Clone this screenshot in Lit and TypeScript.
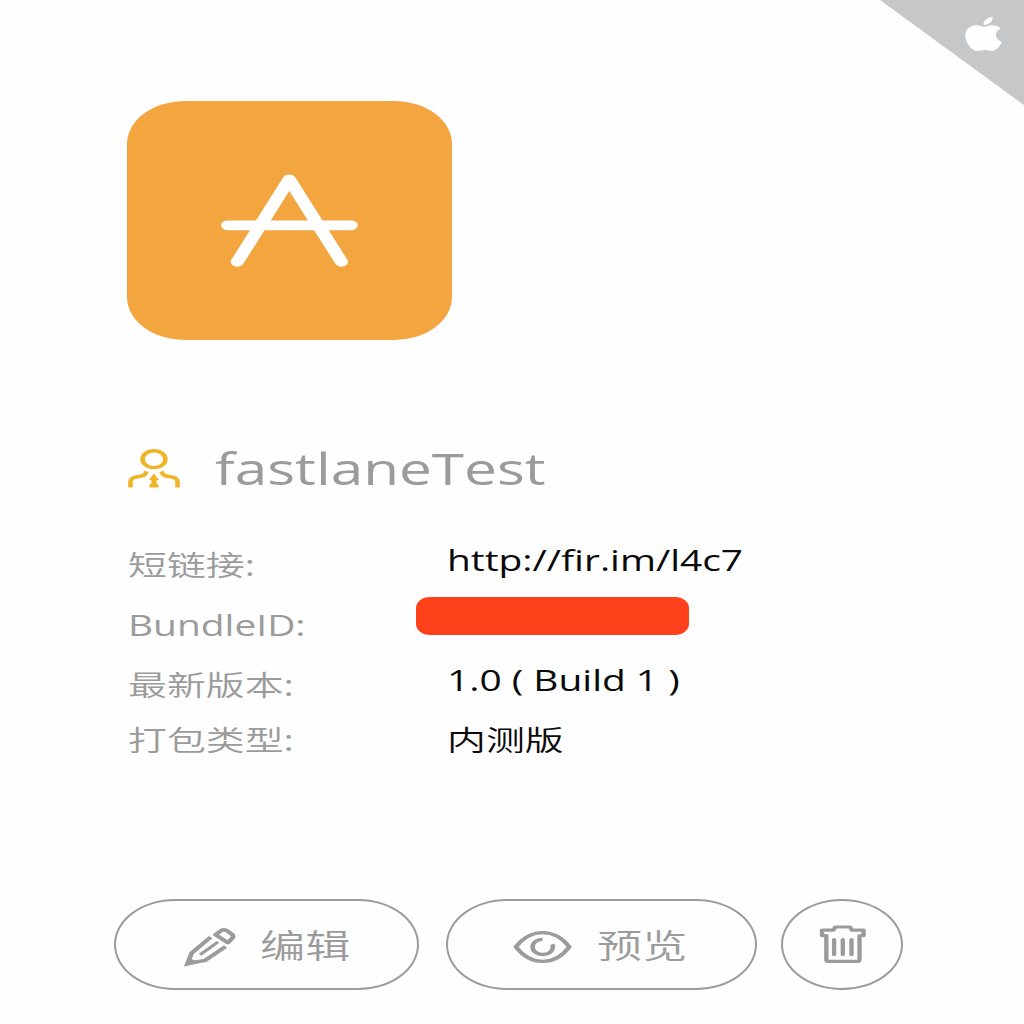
import { LitElement, html, css, svg } from "lit";
import { customElement, property } from "lit/decorators.js";

/* Text drawn with wide letterforms; the box keeps its natural flow position. */
@customElement("wide-text")
class WideText extends LitElement {
  static styles = css`
    :host {
      display: block;
      white-space: pre;
    }
    .glyphs {
      display: inline-block;
      transform: scaleX(1.36);
      transform-origin: 0 50%;
    }
  `;
  render() {
    return html`<span class="glyphs"><slot></slot></span>`;
  }
}

const shapes: Record<string, { w: number; h: number; art: unknown }> = {
  apple: {
    w: 37,
    h: 34,
    art: svg`<g transform="scale(1.88 1.417) translate(-2.1 0)"><path fill="currentColor" d="M12.152 6.896c-.948 0-2.415-1.078-3.96-1.04-2.04.027-3.91 1.183-4.961 3.014-2.117 3.675-.546 9.103 1.519 12.09 1.013 1.454 2.208 3.09 3.792 3.039 1.52-.065 2.09-.687 3.935-.687 1.831 0 2.35.687 3.96.648 1.637-.026 2.676-1.48 3.676-2.948 1.156-1.688 1.636-3.325 1.662-3.415-.039-.013-3.182-1.221-3.22-4.857-.026-3.04 2.48-4.494 2.597-4.559-1.429-2.09-3.623-2.324-4.39-2.376-2-.156-3.675 1.09-4.61 1.09zM15.53 3.83c.843-1.012 1.4-2.427 1.245-3.83-1.207.052-2.662.805-3.532 1.818-.78.896-1.454 2.338-1.273 3.714 1.338.104 2.715-.688 3.559-1.701"/></g>`,
  },
  store: {
    w: 137,
    h: 93,
    art: svg`<g transform="scale(1.36 1)" fill="none" stroke="currentColor" stroke-width="9.7" stroke-linecap="round" stroke-linejoin="round"><path d="M12 87.8 50.2 5.4 88.5 87.8M4.9 51.3H95.7"/></g>`,
  },
  user: {
    w: 52,
    h: 41,
    art: svg`<g transform="scale(1.36 1)" fill="none" stroke="currentColor" stroke-width="3.4"><circle cx="19.1" cy="11.2" r="8.4"/><path d="M13.6 23.4 12.6 26Q11.8 27.6 10 28L5.4 29.2Q1.8 30.4 1.8 34V39.5M24.6 23.4 25.6 26Q26.4 27.6 28.2 28L32.8 29.2Q36.4 30.4 36.4 34V39.5"/><path fill="currentColor" stroke="none" d="M19.1 25.4 22.8 32H21V35.4L22.4 36.2V39.5H15.8V36.2L17.2 35.4V32H15.4Z"/></g>`,
  },
  pencil: {
    w: 52,
    h: 40,
    art: svg`<g transform="scale(1.36 1)" fill="none" stroke="currentColor" stroke-width="3.5"><path d="M19.6 10.2 5.6 26 2.8 36.2 15.6 33.4 30.6 19.5"/><path d="M11.8 27.8 25 15" stroke-width="2.7"/><path fill="currentColor" stroke="none" d="M0 39.4 3.6 27.4 6.2 32.4 11.6 35.9Z"/><path stroke-linejoin="round" d="M23.2 7.7 27.2 3.7Q29.2 2.1 31.4 3.6L35 7Q37 9.2 35.4 11.4L32.2 15.6Z"/></g>`,
  },
  eye: {
    w: 59,
    h: 34,
    art: svg`<g transform="scale(1.36 1)" fill="none" stroke="currentColor" stroke-width="3.3"><path stroke-linejoin="round" d="M2.1 16.9C7 8.5 13.5 2.6 21.8 2.6S36.6 8.5 41.4 16.9C36.6 25.6 30 31.4 21.8 31.4S7 25.6 2.1 16.9Z"/><path d="M21.6 9.3A7.5 7.6 0 1 0 28.9 14.3"/></g>`,
  },
  trash: {
    w: 48,
    h: 41,
    art: svg`<g transform="scale(1.36 1)" fill="none" stroke="currentColor" stroke-width="3.2" stroke-linejoin="round"><path d="M5.4 11.6H2.2V6.1H10.6L12 3H22.8L24.2 6.1H32.8V11.6H29.8M5.4 10.4V35.4Q5.4 37.4 7.4 37.4H27.8Q29.8 37.4 29.8 35.4V10.4"/><path stroke-linecap="round" d="M11.1 15.6V30.4M17.5 15.6V30.4M23.9 15.6V30.4"/></g>`,
  },
};

@customElement("app-icon")
class AppIcon extends LitElement {
  static styles = css`
    :host {
      display: block;
      flex: none;
    }
    .art {
      display: block;
    }
  `;
  @property() name = "apple";
  render() {
    const s = shapes[this.name];
    return html`<svg class="art" width=${s.w} height=${s.h} viewBox="0 0 ${s.w} ${s.h}" aria-hidden="true">${s.art}</svg>`;
  }
}

@customElement("app-root")
class AppRoot extends LitElement {
  static styles = css`
    :host {
      display: block;
      position: relative;
      box-sizing: border-box;
      width: 1024px;
      height: 1024px;
      padding-top: 100.5px;
      overflow: hidden;
      background: #fefefe;
      color: #9b9b9b;
      font-family: "Open Sans", "Noto Sans CJK SC", sans-serif;
      font-size: 28.6px;
    }
    .ribbon {
      position: absolute;
      top: 0;
      right: 0;
      box-sizing: border-box;
      display: flex;
      justify-content: flex-end;
      width: 144px;
      height: 105px;
      padding: 17px 22px 0 0;
      background: #c6c7c9;
      color: #fefefe;
      clip-path: polygon(0 0, 100% 0, 100% 100%);
    }
    .tile {
      box-sizing: border-box;
      width: 325px;
      height: 239.5px;
      margin-left: 127px;
      padding: 73.5px 0 0 94px;
      border-radius: 58px / 43px;
      background: #f3a540;
      color: #fff;
    }
    .title {
      display: flex;
      align-items: center;
      gap: 35px;
      height: 60px;
      margin: 98px 0 0 128px;
    }
    .owner {
      color: #efb526;
    }
    .name {
      padding-top: 1px;
      font-size: 43px;
      line-height: 60px;
    }
    .details {
      display: flex;
      height: 230px;
      margin: 37px 0 0 128px;
    }
    .labels {
      width: 288px;
    }
    .row {
      height: 60px;
      line-height: 60px;
    }
    .last {
      height: 50px;
      line-height: 50px;
    }
    .cjk {
      font-weight: 350;
    }
    .colon {
      font-weight: 400;
    }
    .values {
      display: flex;
      flex-direction: column;
      color: #0a0a0a;
    }
    .value {
      padding-left: 31px;
    }
    .raised {
      margin-top: -5px;
    }
    .masked {
      width: 273px;
      height: 38px;
      margin: 6.5px 0 20.5px;
      border-radius: 14px / 11px;
      background: #ff411b;
    }
    .shift {
      margin-top: 5px;
    }
    .actions {
      display: flex;
      height: 91px;
      margin: 133.5px 0 0 114px;
    }
    .action {
      box-sizing: border-box;
      display: flex;
      align-items: center;
      height: 91px;
      padding: 0;
      border: 2px solid #9b9b9b;
      border-radius: 61px / 45.5px;
      background: transparent;
      color: #9b9b9b;
      font: 350 33.2px/60px "Noto Sans CJK SC", sans-serif;
    }
    .edit {
      width: 305px;
      gap: 24px;
      padding-left: 68px;
    }
    .preview {
      width: 311px;
      gap: 25px;
      margin-left: 27px;
      padding-left: 65px;
    }
    .remove {
      width: 122px;
      margin-left: 24px;
      padding-left: 36px;
    }
    .low {
      margin-top: 5px;
    }
  `;
  render() {
    const colon = html`<span class="colon">:</span>`;
    return html`
      <div class="ribbon"><app-icon name="apple"></app-icon></div>
      <div class="tile"><app-icon name="store"></app-icon></div>
      <div class="title">
        <app-icon class="owner" name="user"></app-icon>
        <wide-text class="name">fastlaneTest</wide-text>
      </div>
      <div class="details">
        <div class="labels">
          <wide-text class="row cjk">短链接${colon}</wide-text>
          <wide-text class="row">BundleID:</wide-text>
          <wide-text class="row cjk">最新版本${colon}</wide-text>
          <wide-text class="row last cjk">打包类型${colon}</wide-text>
        </div>
        <div class="values">
          <wide-text class="row value raised">http://fir.im/l4c7</wide-text>
          <div class="masked"></div>
          <wide-text class="row value raised">1.0 ( Build 1 )</wide-text>
          <wide-text class="row last value shift cjk">内测版</wide-text>
        </div>
      </div>
      <div class="actions">
        <button class="action edit"><app-icon class="low" name="pencil"></app-icon><wide-text>编辑</wide-text></button>
        <button class="action preview"><app-icon class="low" name="eye"></app-icon><wide-text>预览</wide-text></button>
        <button class="action remove" aria-label="删除"><app-icon name="trash"></app-icon></button>
      </div>
    `;
  }
}
